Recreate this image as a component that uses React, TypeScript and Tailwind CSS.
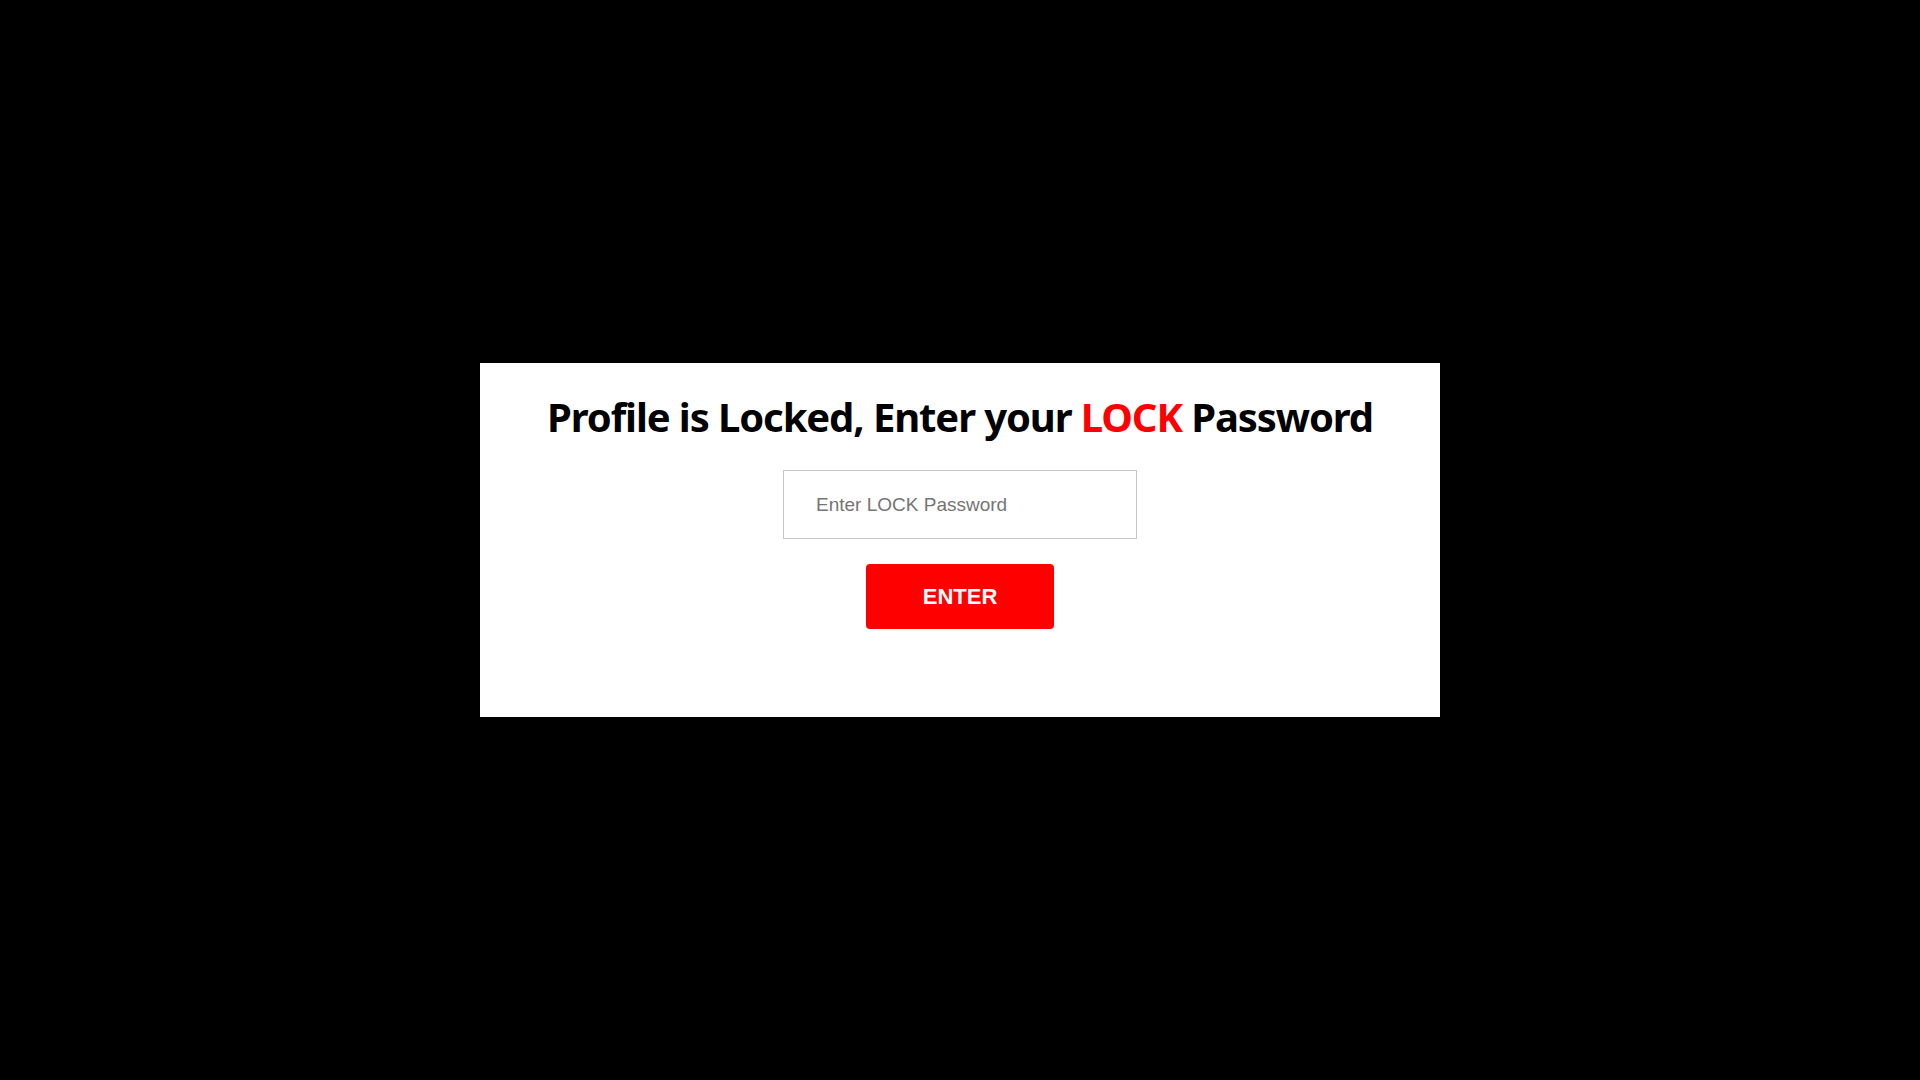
export default function App() {
  return (
    <div className="min-h-[1187px] bg-black">
      <div className="fixed left-[25vw] top-1/2 w-[50vw] -translate-y-1/2 bg-white pt-[30px] pb-[88px] flex flex-col items-center">
        <h1
          className="text-[40px] leading-[48px] font-bold tracking-[-1.1px] text-black text-center"
          style={{ fontFamily: '"Noto Sans", sans-serif' }}
        >
          Profile is Locked, Enter your <span className="text-[#ff0000]">LOCK</span> Password
        </h1>
        <input
          type="password"
          placeholder="Enter LOCK Password"
          className="mt-[29px] h-[69px] w-[354px] border border-[#c8c8c8] px-[32px] text-[19px] text-black placeholder:text-[#757575] outline-none"
          style={{ fontFamily: '"Liberation Sans", Arial, sans-serif' }}
        />
        <button
          className="mt-[25px] h-[65px] w-[188px] rounded-[4px] bg-[#ff0000] text-[22px] font-bold text-white"
          style={{ fontFamily: '"Liberation Sans", Arial, sans-serif' }}
        >
          ENTER
        </button>
      </div>
    </div>
  );
}
